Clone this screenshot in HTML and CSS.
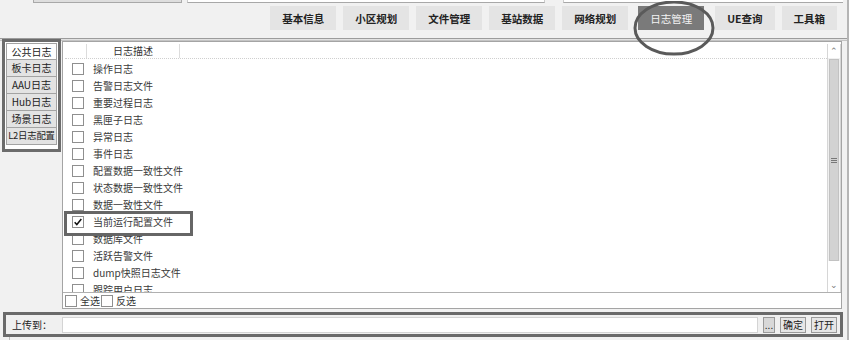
FILE: index.html
```html
<!DOCTYPE html>
<html lang="zh">
<head>
<meta charset="utf-8">
<link rel="stylesheet" href="styles.css">
</head>
<body>
<div class="app">
  <div class="topstrip">
    <div class="ts ts1"></div>
    <div class="ts ts2"></div>
    <div class="ts ts3"></div>
  </div>
  <header class="menubar">
    <button class="menu">基本信息</button>
    <button class="menu">小区规划</button>
    <button class="menu">文件管理</button>
    <button class="menu">基站数据</button>
    <button class="menu">网络规划</button>
    <button class="menu active">日志管理</button>
    <button class="menu">UE查询</button>
    <button class="menu">工具箱</button>
  </header>
  <div class="sep"></div>
  <div class="content">
    <nav class="side">
      <div class="stab selected">公共日志</div>
      <div class="stab">板卡日志</div>
      <div class="stab">AAU日志</div>
      <div class="stab">Hub日志</div>
      <div class="stab">场景日志</div>
      <div class="stab">L2日志配置</div>
    </nav>
    <section class="list">
      <div class="grid">
        <div class="table">
          <div class="thead">
            <div class="th th-cb"></div>
            <div class="th th-desc">日志描述</div>
          </div>
          <div class="rows">
            <div class="row"><span class="cb"></span><span class="lbl">操作日志</span></div>
            <div class="row"><span class="cb"></span><span class="lbl">告警日志文件</span></div>
            <div class="row"><span class="cb"></span><span class="lbl">重要过程日志</span></div>
            <div class="row"><span class="cb"></span><span class="lbl">黑匣子日志</span></div>
            <div class="row"><span class="cb"></span><span class="lbl">异常日志</span></div>
            <div class="row"><span class="cb"></span><span class="lbl">事件日志</span></div>
            <div class="row"><span class="cb"></span><span class="lbl">配置数据一致性文件</span></div>
            <div class="row"><span class="cb"></span><span class="lbl">状态数据一致性文件</span></div>
            <div class="row"><span class="cb"></span><span class="lbl">数据一致性文件</span></div>
            <div class="row marked"><span class="cb checked"><svg viewBox="0 0 12 12" width="10" height="10"><path d="M2 6.2 L4.6 9 L10 2.5" fill="none" stroke="#111" stroke-width="1.8"/></svg></span><span class="lbl">当前运行配置文件</span></div>
            <div class="row"><span class="cb"></span><span class="lbl">数据库文件</span></div>
            <div class="row"><span class="cb"></span><span class="lbl">活跃告警文件</span></div>
            <div class="row"><span class="cb"></span><span class="lbl">dump快照日志文件</span></div>
            <div class="row"><span class="cb"></span><span class="lbl">跟踪用户日志</span></div>
          </div>
        </div>
        <div class="scroll">
          <div class="sbtn">&#8963;</div>
          <div class="thumb"><span class="grip"></span></div>
          <div class="strack"></div>
          <div class="sbtn">&#8964;</div>
        </div>
      </div>
      <div class="selall">
        <span class="cb"></span><span class="sl">全选</span><span class="cb"></span><span class="sl">反选</span>
      </div>
    </section>
  </div>
  <div class="upload">
    <span class="ulabel">上传到：</span>
    <div class="uinput"></div>
    <button class="ubtn dots">...</button>
    <button class="ubtn">确定</button>
    <button class="ubtn">打开</button>
  </div>
  <div class="bottomstrip"></div>
</div>
<svg class="ring" width="86" height="60" viewBox="0 0 86 60"><ellipse cx="42" cy="27" rx="39" ry="26" fill="none" stroke="#5a5a5a" stroke-width="3"/></svg>
</body>
</html>
```
FILE: styles.css
```css
* { box-sizing: border-box; }
html, body { margin: 0; padding: 0; }
body {
  width: 849px;
  height: 340px;
  overflow: hidden;
  background: #f1f1f1;
  font-family: "Noto Sans CJK SC", "Noto Sans", sans-serif;
  font-size: 10px;
  color: #333;
  position: relative;
}
.app {
  width: 849px;
  height: 340px;
  border-right: 2px solid #b5b5b5;
}
.topstrip {
  height: 3px;
  display: flex;
}
.ts { height: 3px; border-bottom: 1px solid #a8a8a8; }
.ts1 { margin-left: 33px; width: 149px; background: #dedede; border-left: 1px solid #aaa; border-right: 1px solid #aaa; }
.ts2 { margin-left: 5px; width: 358px; background: #fff; border-left: 1px solid #ccc; border-right: 1px solid #ccc; }
.ts3 { margin-left: 18px; width: 280px; background: #fff; border-left: 1px solid #ccc; }
.menubar {
  height: 35px;
  display: flex;
  justify-content: flex-end;
  align-items: flex-start;
  gap: 7px;
  padding: 3px 10px 0 0;
}
.menu {
  height: 24px;
  border: none;
  background: #e4e4e4;
  font-family: "Noto Sans CJK SC", sans-serif;
  font-weight: bold;
  font-size: 10.5px;
  color: #222;
  padding: 0 12px;
  margin: 0;
}
.menu.active {
  background: #7a7a7a;
  color: #f4f4f4;
  font-weight: normal;
  margin-left: 3px;
  margin-right: 4px;
}
.sep {
  height: 3px;
  border-top: 1px solid #9c9c9c;
  border-bottom: 1px solid #c4c4c4;
  background: #e2e2e2;
}
.content {
  display: flex;
  height: 268px;
  align-items: flex-start;
}
.side {
  margin-left: 2px;
  margin-top: -2px;
  width: 59px;
  height: 113px;
  border: 3px solid #6c6c6c;
  background: #fff;
  padding: 1px 1px 0 1px;
}
.stab {
  height: 17px;
  border: 1px solid #a3a3a3;
  border-top: none;
  background: #e3e3e3;
  text-align: center;
  line-height: 15px;
  color: #222;
  font-size: 10px;
  white-space: nowrap;
  overflow: hidden;
}
.stab:last-child { font-size: 9.4px; letter-spacing: -0.2px; }
.stab.selected { background: #fff; border-top: 1px solid #a3a3a3; }
.list {
  margin-left: 1px;
  margin-right: 5px;
  flex: 1;
  height: 268px;
  border: 1px solid #a4a4a4;
  background: #fff;
}
.grid {
  display: flex;
  height: 251px;
  border-bottom: 1px solid #b0b0b0;
}
.table {
  flex: 1;
  padding: 2px 0 0 2px;
  overflow: hidden;
}
.thead {
  display: flex;
  height: 15px;
  border-bottom: 1px dotted #cfcfcf;
}
.th { height: 14px; line-height: 14px; color: #333; }
.th-cb { width: 22px; border-right: 1px solid #dcdcdc; }
.th-desc { width: 93px; border-right: 1px solid #dcdcdc; text-align: center; }
.rows { padding-top: 1px; }
.row {
  height: 17px;
  display: flex;
  align-items: center;
}
.cb {
  width: 12px;
  height: 12px;
  border: 1px solid #8f8f8f;
  background: #fff;
  display: inline-flex;
  align-items: center;
  justify-content: center;
  flex: none;
}
.row .cb { margin-left: 7px; }
.lbl { margin-left: 9px; color: #3a3a3a; white-space: nowrap; }
.row.marked { position: relative; }
.row.marked::after {
  content: "";
  position: absolute;
  left: -1px;
  top: -2px;
  width: 123px;
  height: 19px;
  border: 3px solid #666;
}
.scroll {
  width: 14px;
  margin-top: 2px;
  display: flex;
  flex-direction: column;
  background: #f0f0f0;
  border-left: 1px solid #d6d6d6;
  border-right: 1px solid #d6d6d6;
}
.sbtn {
  height: 14px;
  font-size: 9px;
  line-height: 14px;
  text-align: center;
  color: #777;
  background: #fff;
}
.thumb {
  height: 202px;
  margin: 1px 1px 0;
  background: #d2d2d2;
  border: 1px solid #c2c2c2;
  display: flex;
  align-items: center;
  justify-content: center;
}
.grip {
  width: 6px;
  height: 5px;
  border-top: 1px solid #777;
  border-bottom: 1px solid #777;
  background: linear-gradient(#777, #777) center / 6px 1px no-repeat;
}
.strack { flex: 1; background: #fff; }
.selall {
  height: 15px;
  display: flex;
  align-items: center;
  padding-left: 2px;
}
.selall .cb + .sl { margin-left: 3px; }
.sl { color: #333; margin-right: 1px; }
.upload {
  margin: 3px 4px 0 3px;
  height: 25px;
  border: 3px solid #6a6a6a;
  background: #f0f0f0;
  display: flex;
  align-items: center;
  padding: 0 3px 0 6px;
  gap: 2px;
}
.ulabel { width: 48px; color: #222; font-size: 10px; }
.uinput {
  flex: 1;
  height: 16px;
  background: #fff;
  border: 1px solid #d4d4d4;
}
.ubtn {
  height: 16px;
  padding: 0 2px;
  border: 1px solid #9a9a9a;
  background: #e6e6e6;
  font-family: "Noto Sans CJK SC", sans-serif;
  font-size: 10px;
  line-height: 12px;
  color: #222;
  margin: 0 0 0 3px;
}
.ubtn.dots { width: 12px; padding: 0; background: #d8d8d8; }
.bottomstrip {
  height: 3px;
  margin-left: 9px;
  border-left: 1px solid #bbb;
}
.ring {
  position: absolute;
  left: 632px;
  top: 1px;
}
```
